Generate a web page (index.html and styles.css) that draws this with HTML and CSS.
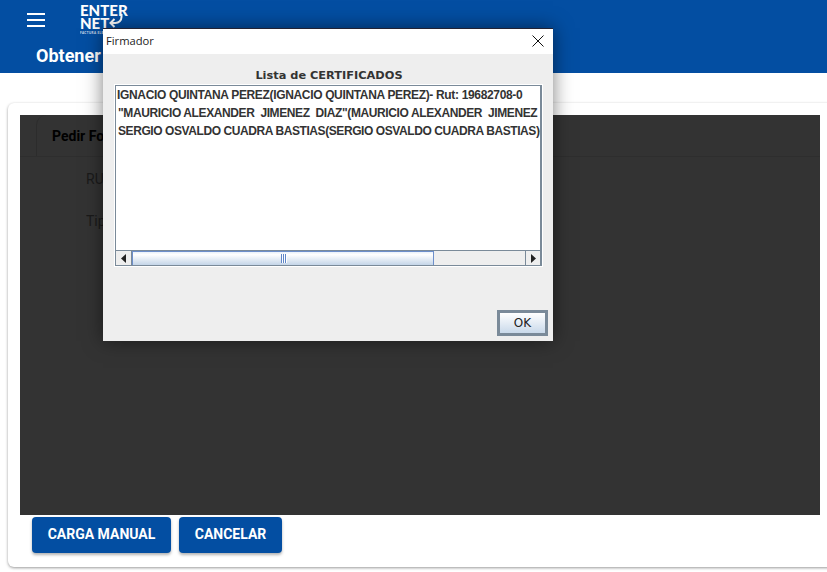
FILE: index.html
```html
<!DOCTYPE html>
<html lang="es">
<head>
<meta charset="utf-8">
<title>Firmador</title>
<link rel="stylesheet" href="styles.css">
</head>
<body>
<header class="app-header">
  <div class="top-row">
    <button class="menu-btn" aria-label="menu"><span></span><span></span><span></span></button>
    <div class="logo">
      <div class="logo-line">ENTER</div>
      <div class="logo-line">NET</div>
      <div class="logo-sub">FACTURA ELECTRONICA</div>
      <svg class="logo-arrow" viewBox="0 0 20 16" width="20" height="16"><path d="M13.500 0V3a6 6 0 0 1-6 6H3M6.500 5 2.500 9l4 4" fill="none" stroke="#fff" stroke-width="2"/></svg>
    </div>
  </div>
  <h1 class="page-title">Obtener Folios</h1>
</header>
<main class="card">
  <section class="panel">
    <div class="tabs"><div class="tab">Pedir Folios</div></div>
    <div class="fields">
      <div class="field">RUT</div>
      <div class="field">Tipo</div>
    </div>
  </section>
  <div class="actions">
    <button class="btn btn-wide">CARGA MANUAL</button>
    <button class="btn btn-narrow">CANCELAR</button>
  </div>
</main>
<div class="dialog">
  <div class="dialog-title">
    <span>Firmador</span>
    <svg class="close" viewBox="0 0 12 12" width="12" height="12"><path d="M.5.5l11 11M11.500.5l-11 11" stroke="#111" fill="none"/></svg>
  </div>
  <div class="dialog-body">
    <div class="list-heading">Lista de CERTIFICADOS</div>
    <div class="listbox">
      <div class="list-items">
        <div class="item i1">IGNACIO QUINTANA PEREZ(IGNACIO QUINTANA PEREZ)- Rut: 19682708-0</div>
        <div class="item i2">"MAURICIO ALEXANDER&nbsp; JIMENEZ&nbsp; DIAZ"(MAURICIO ALEXANDER&nbsp; JIMENEZ&nbsp; DIAZ)- Rut</div>
        <div class="item i3">SERGIO OSVALDO CUADRA BASTIAS(SERGIO OSVALDO CUADRA BASTIAS)- Rut</div>
      </div>
      <div class="scrollbar">
        <div class="arrow"><svg viewBox="0 0 5 9" width="5" height="9"><path d="M0 4.500 5 0v9z" fill="#222"/></svg></div>
        <div class="track">
          <div class="thumb"><i></i><i></i><i></i></div>
        </div>
        <div class="arrow"><svg viewBox="0 0 5 9" width="5" height="9"><path d="M5 4.500 0 0v9z" fill="#222"/></svg></div>
      </div>
    </div>
    <div class="dialog-actions"><button class="ok">OK</button></div>
  </div>
</div>
</body>
</html>
```
FILE: styles.css
```css
* { box-sizing: border-box; }
html, body { margin: 0; height: 572px; overflow: hidden; }
body { background: #fff; font-family: Roboto, sans-serif; position: relative; width: 827px; }

.app-header { height: 73px; background: #034ea2; color: #fff; padding: 0 0 0 27px; }
.top-row { display: flex; height: 37px; align-items: flex-start; }
.menu-btn { width: 18px; height: 14px; margin-top: 13px; padding: 0; border: 0; background: none; display: flex; flex-direction: column; justify-content: space-between; }
.menu-btn span { display: block; height: 2px; background: #fff; }
.logo { position: relative; margin: 4px 0 0 35px; width: 60px; font-family: Lato, sans-serif; font-weight: 900; }
.logo-line { font-size: 15px; line-height: 13px; letter-spacing: 0; }
.logo-sub { font-size: 3px; line-height: 6px; letter-spacing: .4px; white-space: nowrap; overflow: hidden; width: 26px; opacity: .8; }
.logo-arrow { position: absolute; left: 28px; top: 10px; }
.page-title { margin: 8px 0 0 9px; font-size: 18px; line-height: 22px; font-weight: 700; white-space: nowrap; }

.card { width: 830px; height: 464px; margin: 30px 0 0 8px; padding: 12px 0 0 12px; background: #fff; border-radius: 6px; box-shadow: 0 1px 3px rgba(0,0,0,.4); }
.panel { width: 800px; height: 400px; background: #333; color: #111; font-size: 14px; }
.tabs { height: 42px; padding-left: 16px; border-bottom: 1px solid #2e2e2e; }
.tab { width: 130px; height: 41px; padding: 13px 0 0 15px; font-size: 14px; line-height: 16px; font-weight: 700; color: #000; border-left: 1px solid #2c2c2c; border-top-left-radius: 10px; white-space: nowrap; }
.fields { padding: 14px 0 0 66px; color: #1a1a1a; }
.field { height: 42px; font-size: 14px; line-height: 16px; }
.actions { display: flex; gap: 8px; padding: 2px 0 0 12px; }
.btn { height: 36px; border: 0; border-radius: 4px; padding: 0 0 2px; background: #034ea2; color: #fff; font-family: Roboto, sans-serif; font-size: 14px; font-weight: 700; box-shadow: 0 2px 3px rgba(0,0,0,.3); }
.btn-wide { width: 139px; }
.btn-narrow { width: 103px; }

.dialog { position: absolute; left: 103px; top: 28px; width: 450px; height: 313px; background: #eee; box-shadow: 0 0 18px rgba(0,0,0,.5); border-top: 1px solid #223; display: flex; flex-direction: column; }
.dialog-title { height: 25px; flex: none; background: #fff; display: flex; align-items: center; justify-content: space-between; padding: 0 9px 2px 3px; font-family: "Open Sans", sans-serif; font-size: 11.200px; color: #222; }
.dialog-body { flex: 1; display: flex; flex-direction: column; padding: 14px 5px 5px 12px; }
.list-heading { height: 17px; text-align: center; font-family: "DejaVu Sans", sans-serif; font-size: 11.350px; line-height: 15px; font-weight: 700; color: #333; padding-right: 5px; }
.listbox { width: 427px; height: 181px; flex: none; border: 1px solid #7a8a99; border-right-width: 2px; background: #fff; display: flex; flex-direction: column; outline: 1px solid #fff; outline-offset: 0; }
.list-items { flex: 1; overflow: hidden; font-family: "Liberation Sans", sans-serif; font-size: 12px; font-weight: 700; color: #333; }
.item { height: 18px; line-height: 18px; white-space: nowrap; overflow: hidden; }
.i1 { padding-left: 1px; letter-spacing: -.34px; }
.i2 { padding-left: 2px; letter-spacing: -.39px; }
.i3 { padding-left: 2px; letter-spacing: -.42px; }
.scrollbar { height: 15px; flex: none; display: flex; border-top: 1px solid #7a8a99; background: #eee; }
.arrow { width: 16px; flex: none; display: flex; align-items: center; justify-content: center; background: #eee; border-right: 1px solid #7a8a99; }
.arrow:last-child { border-right: 0; border-left: 1px solid #7a8a99; width: 15px; }
.track { flex: 1; background: #eee; }
.thumb { width: 302px; height: 100%; border: 1px solid #6d8fcb; border-width: 1px 1px 0 1px; background: linear-gradient(#e9f1f9, #fff 20%, #c4d5e8); display: flex; gap: 1px; align-items: center; justify-content: center; }
.thumb i { width: 1px; height: 9px; background: #5f86c8; box-shadow: 1px 0 0 #fff; }
.dialog-actions { flex: 1; display: flex; justify-content: flex-end; align-items: flex-end; }
.ok { width: 51px; height: 26px; padding: 0; border: 3px solid #7a8a99; background: linear-gradient(#fff, #c9d9ea); font-family: "DejaVu Sans", sans-serif; font-size: 12px; color: #222; }
```
